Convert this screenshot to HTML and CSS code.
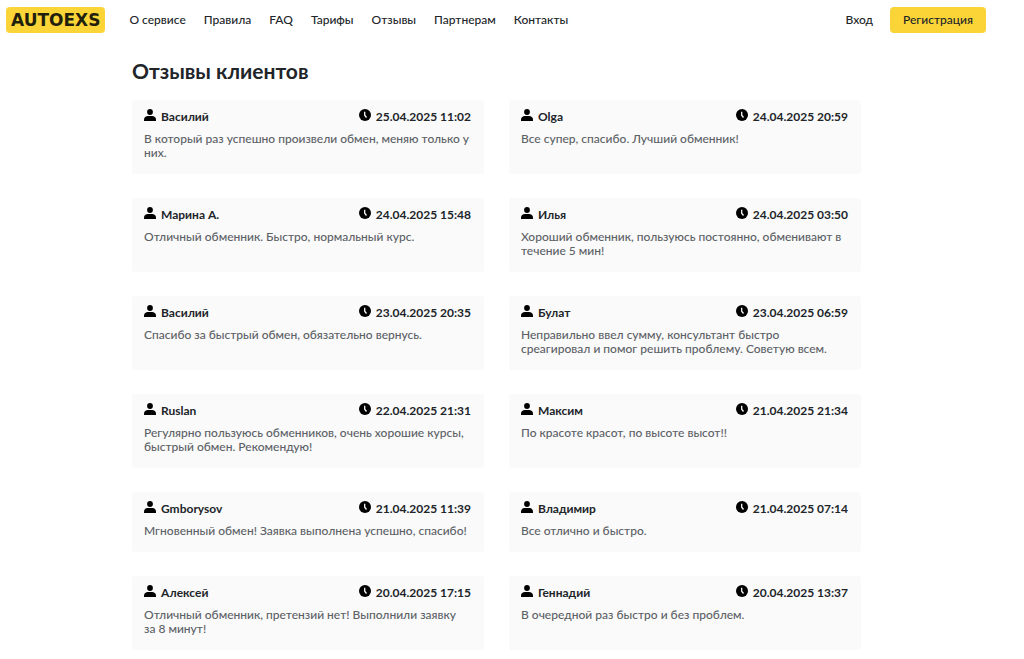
FILE: index.html
```html
<!DOCTYPE html>
<html lang="ru">
<head>
<meta charset="utf-8">
<meta name="viewport" content="width=device-width, initial-scale=1">
<title>AUTOEXS — Отзывы клиентов</title>
<link rel="stylesheet" href="styles.css">
</head>
<body>
<svg class="sprite" aria-hidden="true">
<symbol id="user" viewBox="0 0 12 12"><circle cx="6" cy="3" r="2.9"/><path d="M0 12V10.600C0 8.200 1.800 7 4 7h4c2.200 0 4 1.200 4 3.600V12z"/></symbol>
<symbol id="clock" viewBox="0 0 12 12"><circle cx="6" cy="6" r="6"/><path class="hands" d="M5.700 2.800V6.200L7.500 8.500"/></symbol>
</svg>
<header class="header">
<a class="logo" href="#">AUTOEXS</a>
<nav class="nav">
<a href="#">О сервисе</a><a href="#">Правила</a><a href="#">FAQ</a><a href="#">Тарифы</a><a href="#">Отзывы</a><a href="#">Партнерам</a><a href="#">Контакты</a>
</nav>
<div class="account"><a class="login" href="#">Вход</a><a class="register" href="#">Регистрация</a></div>
</header>
<main class="main">
<h1 class="title">Отзывы клиентов</h1>
<div class="reviews">
<article class="card"><div class="meta"><span class="item"><svg class="icon"><use href="#user"/></svg>Василий</span><span class="item"><svg class="icon"><use href="#clock"/></svg>25.04.2025 11:02</span></div><p class="text">В который раз успешно произвели обмен, меняю только у них.</p></article>
<article class="card"><div class="meta"><span class="item"><svg class="icon"><use href="#user"/></svg>Olga</span><span class="item"><svg class="icon"><use href="#clock"/></svg>24.04.2025 20:59</span></div><p class="text">Все супер, спасибо. Лучший обменник!</p></article>
<article class="card"><div class="meta"><span class="item"><svg class="icon"><use href="#user"/></svg>Марина А.</span><span class="item"><svg class="icon"><use href="#clock"/></svg>24.04.2025 15:48</span></div><p class="text">Отличный обменник. Быстро, нормальный курс.</p></article>
<article class="card"><div class="meta"><span class="item"><svg class="icon"><use href="#user"/></svg>Илья</span><span class="item"><svg class="icon"><use href="#clock"/></svg>24.04.2025 03:50</span></div><p class="text">Хороший обменник, пользуюсь постоянно, обменивают в течение 5 мин!</p></article>
<article class="card"><div class="meta"><span class="item"><svg class="icon"><use href="#user"/></svg>Василий</span><span class="item"><svg class="icon"><use href="#clock"/></svg>23.04.2025 20:35</span></div><p class="text">Спасибо за быстрый обмен, обязательно вернусь.</p></article>
<article class="card"><div class="meta"><span class="item"><svg class="icon"><use href="#user"/></svg>Булат</span><span class="item"><svg class="icon"><use href="#clock"/></svg>23.04.2025 06:59</span></div><p class="text">Неправильно ввел сумму, консультант быстро среагировал и помог решить проблему. Советую всем.</p></article>
<article class="card"><div class="meta"><span class="item"><svg class="icon"><use href="#user"/></svg>Ruslan</span><span class="item"><svg class="icon"><use href="#clock"/></svg>22.04.2025 21:31</span></div><p class="text">Регулярно пользуюсь обменников, очень хорошие курсы, быстрый обмен. Рекомендую!</p></article>
<article class="card"><div class="meta"><span class="item"><svg class="icon"><use href="#user"/></svg>Максим</span><span class="item"><svg class="icon"><use href="#clock"/></svg>21.04.2025 21:34</span></div><p class="text">По красоте красот, по высоте высот!!</p></article>
<article class="card"><div class="meta"><span class="item"><svg class="icon"><use href="#user"/></svg>Gmborysov</span><span class="item"><svg class="icon"><use href="#clock"/></svg>21.04.2025 11:39</span></div><p class="text">Мгновенный обмен! Заявка выполнена успешно, спасибо!</p></article>
<article class="card"><div class="meta"><span class="item"><svg class="icon"><use href="#user"/></svg>Владимир</span><span class="item"><svg class="icon"><use href="#clock"/></svg>21.04.2025 07:14</span></div><p class="text">Все отлично и быстро.</p></article>
<article class="card"><div class="meta"><span class="item"><svg class="icon"><use href="#user"/></svg>Алексей</span><span class="item"><svg class="icon"><use href="#clock"/></svg>20.04.2025 17:15</span></div><p class="text">Отличный обменник, претензий нет! Выполнили заявку за&nbsp;8 минут!</p></article>
<article class="card"><div class="meta"><span class="item"><svg class="icon"><use href="#user"/></svg>Геннадий</span><span class="item"><svg class="icon"><use href="#clock"/></svg>20.04.2025 13:37</span></div><p class="text">В очередной раз быстро и без проблем.</p></article>
</div>
</main>
</body>
</html>
```
FILE: styles.css
```css
* { box-sizing: border-box; }
body {
  margin: 0;
  padding-right: 31px;
  background: #fff;
  color: #212529;
  font: 500 12px/14px Lato, "Open Sans", sans-serif;
}
a { color: inherit; text-decoration: none; }
.sprite { display: none; }
.header {
  display: flex;
  align-items: center;
  padding: 7px 7px 0 6px;
}
.logo {
  padding: 0 5px;
  border-radius: 4px;
  background: #fbd437;
  color: #1f1f0c;
  font: 700 17px/26px "DejaVu Sans", sans-serif;
}
.nav { display: flex; gap: 18px; margin-left: 24px; }
.account { display: flex; align-items: center; gap: 17px; margin-left: auto; }
.register {
  padding: 0 13px;
  border-radius: 4px;
  background: #fbd437;
  line-height: 26px;
}
.main { max-width: 729px; margin: 0 auto; padding: 24px 0; }
.title { margin: 0 0 15px; font-size: 21px; line-height: 28px; font-weight: 700; }
.reviews {
  display: grid;
  grid-template-columns: 1fr 1fr;
  gap: 24px 25px;
}
.card {
  padding: 9px 13px 14px 12px;
  border-radius: 3px;
  background: #fafafa;
}
.meta { display: flex; justify-content: space-between; margin-bottom: 7px; }
.item { display: flex; gap: 5px; font-weight: 700; line-height: 16px; }
.icon { width: 12px; height: 12px; fill: #000; }
.hands { fill: none; stroke: #fafafa; stroke-width: 1.3; }
.text { margin: 0; color: #5c6166; }
```
